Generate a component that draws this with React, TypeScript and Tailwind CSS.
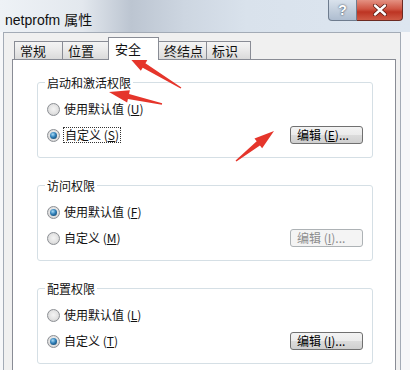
import React from "react";

type Row = { label: string; key: string };
type Group = {
  title: string;
  rows: Row[];
  checked: number;
  editKey: string;
  disabled?: boolean;
  focus?: boolean;
};

const tabs = [
  { name: "常规", w: "w-[49px]" },
  { name: "位置", w: "w-[47px]" },
  { name: "安全", w: "w-[51px]", active: true },
  { name: "终结点", w: "w-[49px]" },
  { name: "标识", w: "w-[45px]" },
];

const groups: Group[] = [
  {
    title: "启动和激活权限",
    rows: [
      { label: "使用默认值", key: "U" },
      { label: "自定义", key: "S" },
    ],
    checked: 1,
    editKey: "E",
    focus: true,
  },
  {
    title: "访问权限",
    rows: [
      { label: "使用默认值", key: "F" },
      { label: "自定义", key: "M" },
    ],
    checked: 0,
    editKey: "I",
    disabled: true,
  },
  {
    title: "配置权限",
    rows: [
      { label: "使用默认值", key: "L" },
      { label: "自定义", key: "T" },
    ],
    checked: 1,
    editKey: "I",
  },
];

// tail -> tip, red marker arrows drawn over the screenshot
const arrows = [
  { t: [181, 88], p: [127, 55] },
  { t: [162, 104], p: [109, 92] },
  { t: [236, 161], p: [274, 131] },
];

const arrowPoints = (t: number[], p: number[]) => {
  const dx = p[0] - t[0];
  const dy = p[1] - t[1];
  const len = Math.hypot(dx, dy);
  const ux = dx / len;
  const uy = dy / len;
  const nx = -uy;
  const ny = ux;
  const head = 20;
  const bx = p[0] - ux * head;
  const by = p[1] - uy * head;
  const pt = (x: number, y: number, w: number) => `${x + nx * w},${y + ny * w}`;
  const ptm = (x: number, y: number, w: number) => `${x - nx * w},${y - ny * w}`;
  return [
    pt(t[0], t[1], 0.7),
    pt(bx, by, 2.6),
    pt(bx, by, 6.2),
    `${p[0]},${p[1]}`,
    ptm(bx, by, 6.2),
    ptm(bx, by, 2.6),
    ptm(t[0], t[1], 0.7),
  ].join(" ");
};

const Radio = ({ on }: { on: boolean }) => (
  <span className="w-[13px] h-[13px] rounded-full border border-[#8c8f94] bg-[radial-gradient(circle_at_50%_45%,#f4f4f4_0%,#e2e2e2_55%,#c6c6c6_100%)] flex items-center justify-center shrink-0">
    {on && (
      <span className="w-[7px] h-[7px] rounded-full bg-[radial-gradient(circle_at_40%_35%,#a9dcf7_0%,#2f7fb8_45%,#0c3353_100%)]" />
    )}
  </span>
);

const Mn = ({ label, k }: { label: string; k: string }) => (
  <span>
    {label} (<span className="underline">{k}</span>)
  </span>
);

const GroupBox = ({ g }: { g: Group }) => (
  <div className="border border-[#d5dfe5] rounded-[3px] flex flex-col pl-[9px] pr-[9px] pb-[11px]">
    <div className="-mt-[7px] -ml-[2px] px-[2px] w-fit bg-white leading-[14px]">{g.title}</div>
    <div className="mt-[8px] h-[22px] flex items-center gap-[4px]">
      <Radio on={g.checked === 0} />
      <Mn label={g.rows[0].label} k={g.rows[0].key} />
    </div>
    <div className="mt-[4px] h-[22px] flex items-center">
      <div className="flex items-center gap-[4px]">
        <Radio on={g.checked === 1} />
        {g.focus ? (
          <span className="outline-1 outline-dotted outline-[#333] px-[1px] leading-[14px]">
            <Mn label={g.rows[1].label} k={g.rows[1].key} />
          </span>
        ) : (
          <Mn label={g.rows[1].label} k={g.rows[1].key} />
        )}
      </div>
      <div
        className={
          g.disabled
            ? "ml-auto w-[73px] h-[18px] rounded-[3px] border border-[#adb2b5] bg-[#f4f4f4] text-[#8d8d8d] flex items-center pl-[6px] leading-none"
            : "ml-auto w-[73px] h-[18px] rounded-[3px] border border-[#707070] bg-[linear-gradient(#f3f3f3_0%,#ebebeb_50%,#dcdcdc_50%,#cfcfcf_100%)] text-black flex items-center pl-[6px] leading-none"
        }
      >
        编辑 (<span className="underline">{g.editKey}</span>)...
      </div>
    </div>
  </div>
);

export default function App() {
  return (
    <div className="w-[410px] h-[370px] overflow-hidden relative flex flex-col bg-[#f6f7f9] text-[12px] text-[#111] font-['Noto_Sans_CJK_SC',sans-serif]">
      {/* title bar */}
      <div className="h-[32px] shrink-0 flex items-start bg-[linear-gradient(90deg,#eef2f6_0%,#e3e8ee_20%,#bcc5d1_32%,#cdd6e1_45%,#d9e2ec_60%,#dde6f0_100%)]">
        <div className="pl-[5px] pt-[11px] text-[14px] leading-[18px] text-[#111] font-['Liberation_Sans','Noto_Sans_CJK_SC',sans-serif]">
          netprofm 属性
        </div>
        <div className="ml-auto mr-[7px] flex">
          <div className="w-[29px] h-[21px] rounded-bl-[4px] border border-t-0 border-[#6e7c8e] bg-[linear-gradient(#d9e2ec_0%,#c3cfdd_50%,#aebdd0_100%)] flex items-center justify-center text-[14px] font-bold text-white leading-none [text-shadow:0_0_2px_#1e2a3a] font-['Liberation_Sans',sans-serif]">
            ?
          </div>
          <div className="w-[46px] h-[21px] rounded-br-[4px] border border-t-0 border-l-0 border-[#6b2a22] bg-[linear-gradient(#e49182_0%,#cf5543_45%,#bd3423_60%,#cf5a45_100%)] flex items-center justify-center">
            <svg width="14" height="12" viewBox="0 0 14 12">
              <path d="M2 1.5 L12 10.5 M12 1.5 L2 10.5" stroke="#5a1a12" strokeWidth="4" strokeLinecap="round" />
              <path d="M2 1.5 L12 10.5 M12 1.5 L2 10.5" stroke="#ffffff" strokeWidth="2.4" strokeLinecap="round" />
            </svg>
          </div>
        </div>
      </div>

      {/* dialog body */}
      <div className="flex-1 ml-[3px] mr-[9px] border-l border-t border-r border-[#a3abb6] bg-[#f0f0f0] pl-[8px] pr-[4px] pt-[4px] flex flex-col">
        <div className="h-[22px] ml-[2px] flex items-end">
          {tabs.map((t, i) =>
            t.active ? (
              <div
                key={t.name}
                className={`${t.w} -ml-px -mb-px h-[23px] relative z-10 bg-white border border-b-0 border-[#898c95] pl-[6px] flex items-center text-[13px]`}
              >
                {t.name}
              </div>
            ) : (
              <div
                key={t.name}
                className={`${t.w} ${i === 0 ? "" : "-ml-px"} h-[18px] border border-b-0 border-[#898c95] bg-[linear-gradient(#f4f4f4_0%,#e9e9e9_50%,#dadada_100%)] pl-[5px] flex items-center text-[13px]`}
              >
                {t.name}
              </div>
            )
          )}
        </div>
        <div className="h-[330px] bg-white border border-[#898c95] pl-[24px] pr-[22px] pt-[22px] flex flex-col gap-[27px]">
          {groups.map((g) => (
            <GroupBox key={g.title} g={g} />
          ))}
        </div>
      </div>

      {/* red annotation arrows */}
      <svg className="absolute inset-0 pointer-events-none" width="410" height="370" viewBox="0 0 410 370">
        {arrows.map((a, i) => (
          <polygon key={i} points={arrowPoints(a.t, a.p)} fill="#e5352b" />
        ))}
      </svg>
    </div>
  );
}
